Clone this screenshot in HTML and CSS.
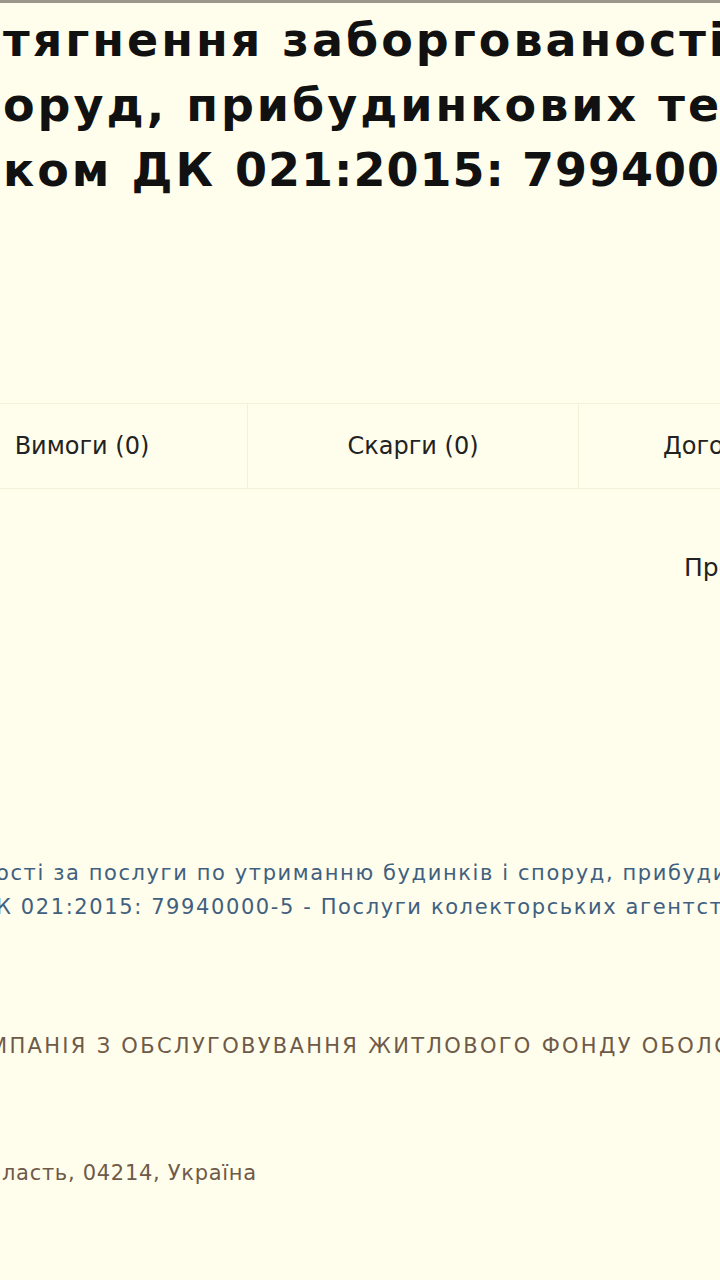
FILE: index.html
```html
<!DOCTYPE html>
<html lang="uk">
<head>
    <meta charset="UTF-8">
    <meta name="viewport" content="width=device-width, initial-scale=1.0">
    <title>Закупівля</title>
    <link rel="stylesheet" href="styles.css">
</head>
<body>
    <div class="top-line"></div>

    <!-- Tender title -->
    <h1 class="tender-title">
        <span class="title-line">тягнення заборгованості</span>
        <span class="title-line">оруд, прибудинкових територій</span>
        <span class="title-line">ком ДК <span class="cpv-code">021:2015: 79940000-5</span></span>
    </h1>

    <!-- Tabs -->
    <nav class="tabs">
        <div class="tab">Вимоги (0)</div>
        <div class="tab">Скарги (0)</div>
        <div class="tab">Договори (0)</div>
    </nav>

    <div class="offers">Пропозиції</div>

    <!-- Description -->
    <div class="description">
        <p class="desc-line">ості за послуги по утриманню будинків і споруд, прибудинкових територій</p>
        <p class="desc-line">К 021:2015: 79940000-5 - Послуги колекторських агентств</p>
    </div>

    <div class="buyer">
        <p class="buyer-name">МПАНІЯ З ОБСЛУГОВУВАННЯ ЖИТЛОВОГО ФОНДУ ОБОЛОНСЬКОГО РАЙОНУ</p>
        <p class="buyer-address">ласть, 04214, Україна</p>
    </div>
</body>
</html>
```

FILE: styles.css
```css
body {
    margin: 0;
    background-color: #fffeec;
    font-family: 'DejaVu Sans', 'Liberation Sans', sans-serif;
    color: #222;
    overflow: hidden;
    width: 720px;
    height: 1280px;
}

.top-line {
    height: 3px;
    background-color: #9b978a;
}

/* Title */
.tender-title {
    margin: 5px 0 0 0;
    padding-left: 3px;
    font-size: 46px;
    font-weight: 700;
    line-height: 65px;
    letter-spacing: 3px;
    color: #111;
    white-space: nowrap;
}

.title-line {
    display: block;
}

.cpv-code {
    letter-spacing: 1px;
}

/* Tabs */
.tabs {
    display: flex;
    margin-top: 200px;
    margin-left: -83px;
    border-top: 1px solid #f4f0da;
    border-bottom: 1px solid #f4f0da;
}

.tab {
    flex: none;
    width: 330px;
    height: 84px;
    display: flex;
    align-items: center;
    justify-content: center;
    border-right: 1px solid #f4f0da;
    font-size: 24px;
    white-space: nowrap;
}

.offers {
    margin-top: 64px;
    padding-left: 684px;
    font-size: 25px;
    line-height: 30px;
    white-space: nowrap;
}

/* Description */
.description {
    margin-top: 273px;
}

.desc-line {
    margin: 0 0 0 -4px;
    font-size: 21px;
    line-height: 34px;
    letter-spacing: 1.6px;
    color: #41607f;
    white-space: nowrap;
}

.buyer {
    margin-top: 105px;
    color: #6f5a49;
    font-size: 21px;
    line-height: 34px;
    white-space: nowrap;
}

.buyer-name {
    margin: 0 0 0 -11px;
    letter-spacing: 2.3px;
}

.buyer-address {
    margin: 93px 0 0 2px;
    letter-spacing: 0.7px;
}
```
